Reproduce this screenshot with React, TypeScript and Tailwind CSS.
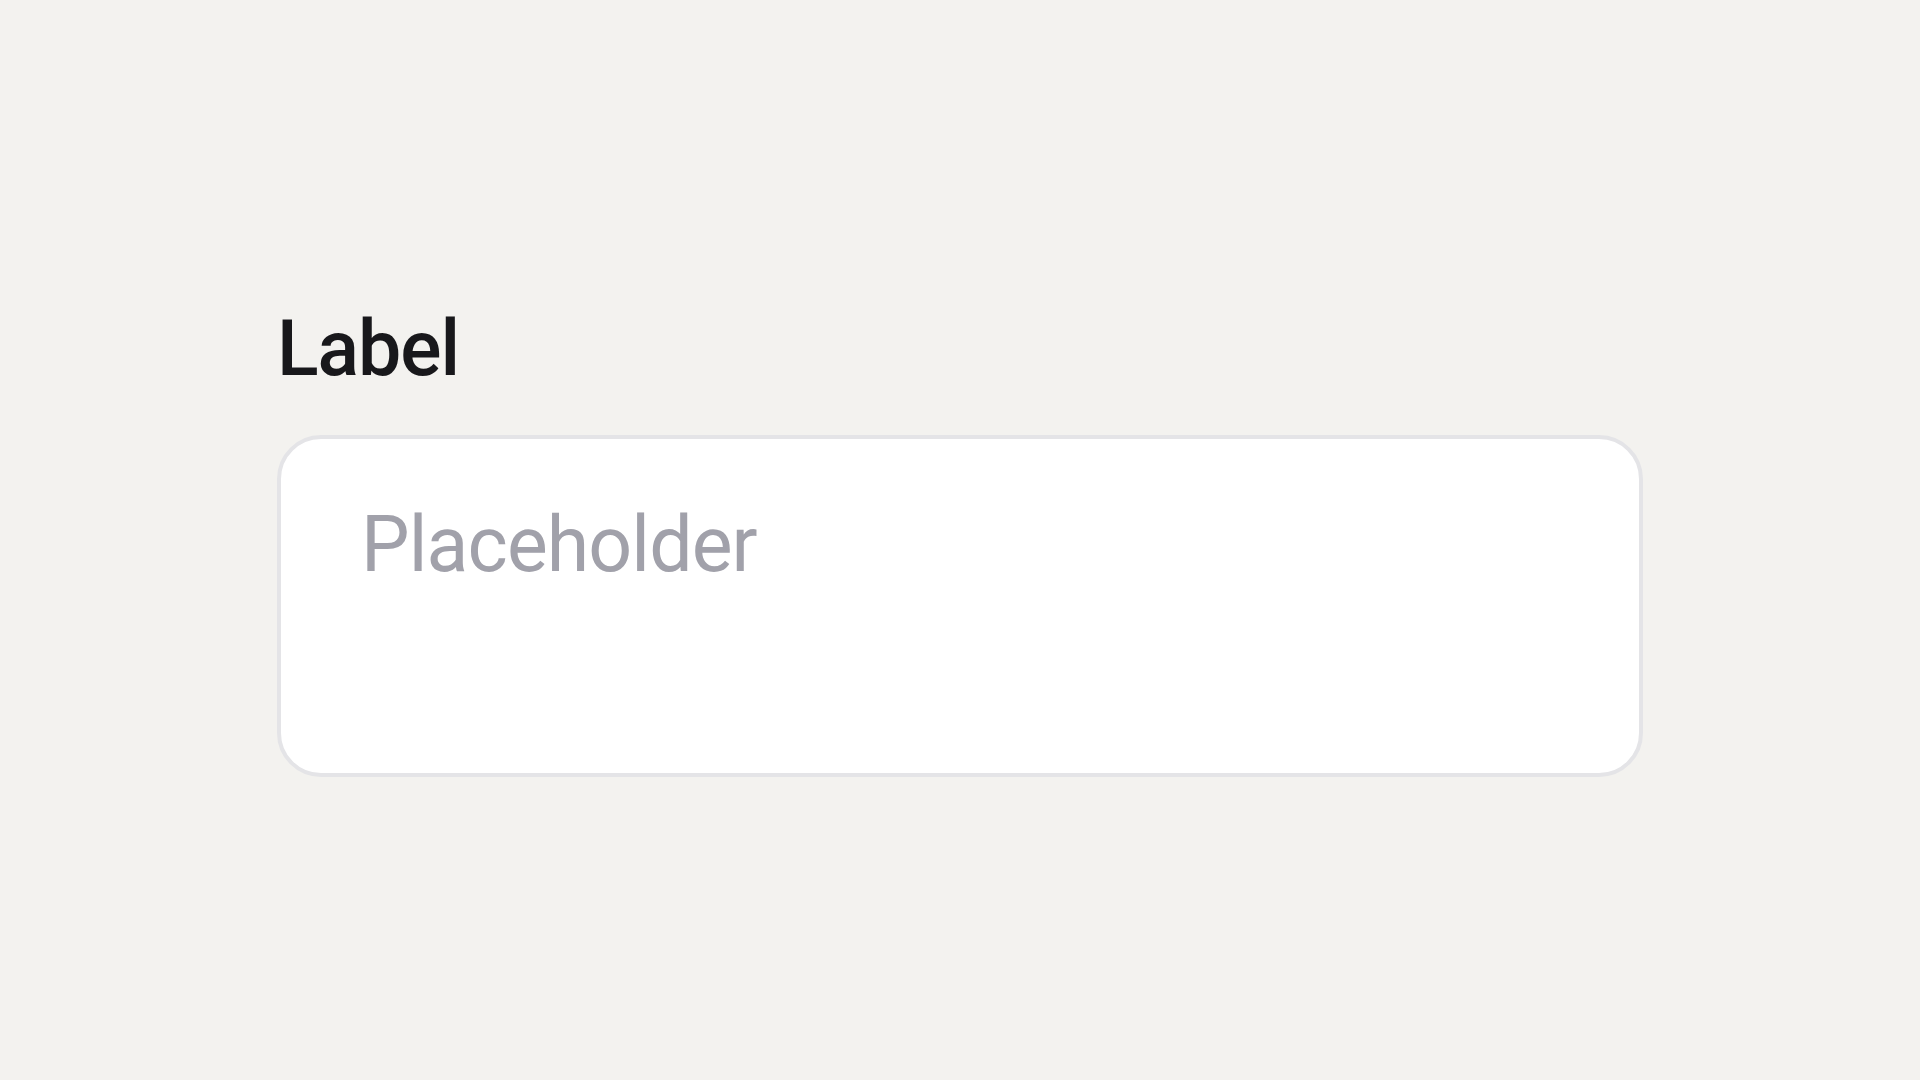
export default function App() {
  return (
    <div className="min-h-screen w-full bg-[#f3f2ef] flex items-center justify-center font-['Roboto',sans-serif]">
      <div className="w-[1366px] flex flex-col gap-[41px]">
        <label htmlFor="field" className="text-[77px] leading-[90px] font-medium tracking-[-1px] text-[#18181b]">
          Label
        </label>
        <textarea
          id="field"
          placeholder="Placeholder"
          className="h-[342px] w-full resize-none rounded-[44px] border-4 border-[#e4e4e7] bg-white pl-[80px] pt-[61px] pr-[80px] text-[77px] leading-[90px] tracking-[-0.9px] text-[#18181b] outline-none placeholder:text-[#a1a1aa]"
        />
      </div>
    </div>
  );
}
